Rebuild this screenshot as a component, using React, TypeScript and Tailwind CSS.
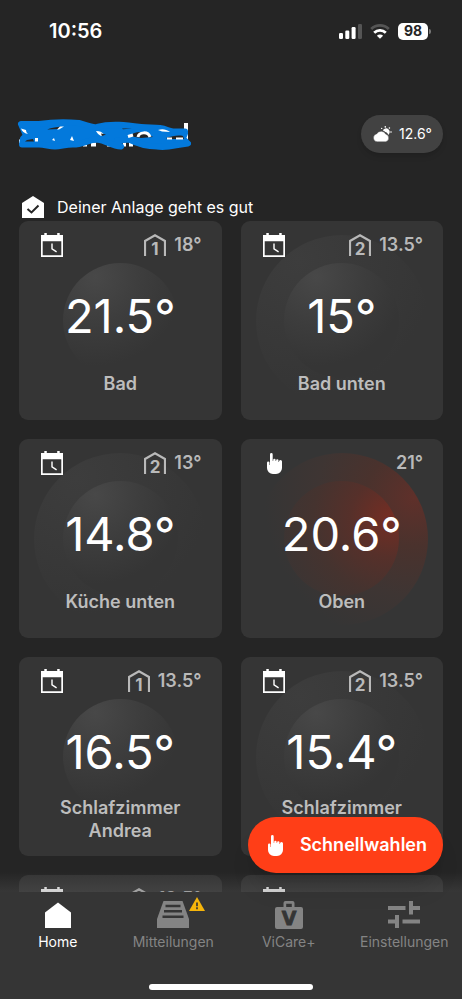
type Room = {
  name: string
  temp: string
  target: string
  program?: "1" | "2"
  manual?: boolean
  raised?: boolean
  rings: "small" | "double" | "heating"
}

const rooms: Room[] = [
  { name: "Bad", temp: "21.5°", target: "18°", program: "1", rings: "small" },
  { name: "Bad unten", temp: "15°", target: "13.5°", program: "2", rings: "double" },
  { name: "Küche unten", temp: "14.8°", target: "13°", program: "2", rings: "double" },
  { name: "Oben", temp: "20.6°", target: "21°", manual: true, rings: "heating" },
  { name: "Schlafzimmer\nAndrea", temp: "16.5°", target: "13.5°", program: "1", rings: "small" },
  { name: "Schlafzimmer", temp: "15.4°", target: "13.5°", program: "2", raised: true, rings: "double" },
  { name: "", temp: "", target: "13.5°", program: "1", rings: "small" },
  { name: "", temp: "", target: "", rings: "small" },
]

function CalendarIcon() {
  return (
    <svg className="w-[22px] h-6" viewBox="0 0 22 24" fill="none">
      <path
        fill="#fff"
        fillRule="evenodd"
        d="M3.3 0h2.5v2h10.4V0h2.5v2H22v22H0V2h3.3zM1.7 8.2v14h18.6v-14z"
      />
      <path d="M11 10.4v5.4l4.6 3" stroke="#fff" strokeWidth="1.4" />
    </svg>
  )
}

function HandIcon() {
  return (
    <svg className="w-[15px] h-[21px]" viewBox="0 0 15 21" fill="#fff">
      <path d="M3 1.4a1.35 1.35 0 0 1 2.7 0V8h.5V7a1.2 1.2 0 0 1 2.4 0v1h.5v-.5a1.2 1.2 0 0 1 2.4 0V9h.5v-.4a1.4 1.4 0 0 1 3 0V15a6 6 0 0 1-6 6H6a6 6 0 0 1-6-6V9.8a1.25 1.25 0 0 1 2.5 0V12H3z" />
    </svg>
  )
}

function ProgramIcon({ n }: { n: string }) {
  return (
    <svg className="w-[22px] h-[30px]" viewBox="0 -4 22 30" fill="none">
      <path d="M1 22V7l10-5.700L21 7v15" stroke="#b9b9b9" strokeWidth="2.200" />
      <text x="11" y="21" textAnchor="middle" fill="#b9b9b9" fontSize="17" fontWeight="700">
        {n}
      </text>
    </svg>
  )
}

function Rings({ kind }: { kind: Room["rings"] }) {
  if (kind === "heating") {
    return (
      <>
        <div className="absolute inset-0 m-auto size-[172px] rounded-full bg-[radial-gradient(circle_at_92%_26%,#5f302a_0%,#4a322d_24%,#3e3533_48%,#353535_74%)]" />
        <div className="absolute inset-0 m-auto size-[115px] rounded-full bg-[radial-gradient(circle_at_92%_32%,#752d23_0%,#56302a_30%,#45332f_58%,#3a3534_90%)]" />
      </>
    )
  }
  return (
    <>
      {kind === "double" && (
        <div className="absolute inset-0 m-auto size-[172px] rounded-full bg-[radial-gradient(circle_at_25%_15%,#3d3d3d_0%,#393939_35%,#353535_70%)]" />
      )}
      <div className="absolute inset-0 m-auto size-[115px] rounded-full bg-[radial-gradient(circle_at_28%_12%,#484848_0%,#3d3d3d_36%,#353535_68%)]" />
    </>
  )
}

function RoomCard({ room }: { room: Room }) {
  return (
    <article className="relative flex flex-col h-[199px] rounded-[9px] bg-[#353535]">
      <Rings kind={room.rings} />
      <div className="relative flex h-12 items-center justify-between pl-[22px] pr-5">
        {room.manual ? (
          <span className="pl-1">
            <HandIcon />
          </span>
        ) : (
          <CalendarIcon />
        )}
        <div className="flex items-center gap-2 text-lg font-semibold text-[#b9b9b9]">
          {room.program && <ProgramIcon n={room.program} />}
          <span>{room.target}</span>
        </div>
      </div>
      <div className="relative flex h-[94px] items-center justify-center text-[47px] text-white">
        {room.temp}
      </div>
      <h2 className="relative flex h-10 flex-col items-center justify-center whitespace-pre-line text-center text-lg leading-[23px] font-semibold text-[#bdbdbd]">
        {room.name}
        {room.raised && <span className="h-[23px] shrink-0" />}
      </h2>
    </article>
  )
}

function StatusBar() {
  return (
    <div className="flex h-[62px] items-center justify-between pl-[49px] pr-[31px] text-white">
      <span className="text-xl font-semibold">10:56</span>
      <div className="flex items-center gap-2">
        <svg className="w-[23px] h-[15px]" viewBox="0 0 23 15" fill="#fff">
          <rect x="0" y="9" width="4" height="6" rx="1.2" />
          <rect x="6.3" y="6.5" width="4" height="8.5" rx="1.2" />
          <rect x="12.6" y="3" width="4" height="12" rx="1.2" />
          <rect x="19" y="0" width="4" height="15" rx="1.2" fill="#555" />
        </svg>
        <svg className="w-5 h-[15px]" viewBox="0 0 20 15" fill="none" strokeWidth="2.8">
          <path d="M1.2 5a12.6 12.6 0 0 1 17.6 0" stroke="#555" />
          <path d="M4.2 8.7a8.3 8.3 0 0 1 11.6 0" stroke="#fff" />
          <path d="M10 14.800 6.900 11.800a4.400 4.400 0 0 1 6.200 0z" fill="#fff" />
        </svg>
        <div className="flex items-center gap-px">
          <span className="flex h-[17px] w-[30px] items-center justify-center rounded-[5px] bg-white text-sm font-bold text-[#252525]">
            98
          </span>
          <span className="h-[5px] w-0.5 rounded-r-full bg-[#777]" />
        </div>
      </div>
    </div>
  )
}

function CoveredName() {
  return (
    <svg className="-ml-0.5 w-[174px] h-8" viewBox="0 0 174 32" fill="none" role="img">
      <path
        d="M2 23.500h5M66 26.500h4M74 26.500h5M90 26.500h4M106 26.500h3M112 26.500h4"
        stroke="#fff"
        strokeWidth="4"
      />
      <path d="M169 5v17" stroke="#fff" strokeWidth="4" />
      <path
        d="M4 6h18c14-2 28-2 40-1 8 2 12 5 18 4 14-4 30-2 44 0 8 1 12 0 19 1s8 3 13 3.500h12v2l-2 5 5 5c-12 1-20 5-31 3-12 0-20-3-28-7l-12 1 4 6c-10 0-14-6-24-7-8 0-14 5-24 5-8 0-12 2-18 2s-10-2-16-2H5l1-6 3-3z"
        fill="#0379dc"
        stroke="#0379dc"
        strokeWidth="6"
        strokeLinejoin="round"
      />
      <path d="M4 10.500c1 3 3 4.500 7 5.500-1-1-2-2-2-4z" fill="#fff" />
      <path d="M8 23.500h9l-1-2.500-6 1zM30 11.500c5-2 10-2.500 14-3l-2 2.500z" fill="#252525" />
      <path d="M43 8.500h4l-5 3h-2z" fill="#fff" />
      <path d="M18 20h3v3.500h-3zM35 22l2-2 1 3zM53 22l2-4 2 5z" fill="#fff" />
      <path d="M79 13c4 0 6 1 8 3.500l-3 1.500c-2-1-4-3-5-5z" fill="#fff" />
      <path d="M84 15.500l5 1-4 1.500zM105 10.500h10l-9 .8z" fill="#252525" />
      <path d="M112 18c5-4 11-5 17-3l7 4-12 1z" fill="#252525" />
      <path d="M121 19c1-5 10-6 12 0M111 18.500l5-1.500" stroke="#fff" strokeWidth="3" />
      <path d="M141 12c4-1.500 8-1 12 2l-8-.5z" fill="#fff" />
      <path d="M149 20c6-2 12-3 17-2l1 3h-16z" fill="#252525" />
      <path d="M150 20.500h5M159 20.500h7" stroke="#fff" strokeWidth="2" />
    </svg>
  )
}

function WeatherButton() {
  return (
    <button
      type="button"
      className="flex h-[38px] items-center gap-[7px] rounded-full bg-[#424242] pl-3 pr-[11px] text-sm text-white shadow-md"
    >
      <svg className="w-[19px] h-4" viewBox="0 0 19 16" fill="#fff">
        <path d="M9.800 4.600a3.600 3.600 0 1 1 5.400 4.300c-.3-1.600-1.500-2.700-3-2.900-.6-.7-1.400-1.200-2.400-1.400z" />
        <circle cx="12.300" cy=".9" r=".8" />
        <circle cx="8.700" cy="2.400" r=".7" />
        <circle cx="16.400" cy="2" r=".8" />
        <circle cx="18" cy="6" r=".8" />
        <path
          d="M4.200 15.800a4 4 0 0 1-.6-7.900A5.200 5.200 0 0 1 12.800 8.200a3.900 3.900 0 0 1-.2 7.600z"
          stroke="#424242"
          strokeWidth=".4"
        />
      </svg>
      12.6°
    </button>
  )
}

function HomeIcon() {
  return (
    <svg className="w-8 h-7" viewBox="0 0 32 28" fill="#fff">
      <path d="M3 11.500 16 1.500l13 10V27H3z" />
    </svg>
  )
}

function InboxIcon() {
  return (
    <svg className="w-8 h-7" viewBox="0 0 32 28">
      <path d="M6.500 0h19L32 18v9H0v-9z" fill="#848484" />
      <path d="M8.500 5h15M7 10.300h18M5.500 15.700h21" stroke="#353535" strokeWidth="2.400" />
    </svg>
  )
}

function BagIcon() {
  return (
    <svg className="w-[30px] h-7" viewBox="0 0 30 28">
      <path
        fill="#848484"
        fillRule="evenodd"
        d="M9.500 6V2a2 2 0 0 1 2-2h7a2 2 0 0 1 2 2v4H27a2 2 0 0 1 2 2v18a2 2 0 0 1-2 2H3a2 2 0 0 1-2-2V8a2 2 0 0 1 2-2zm2.700 0h5.600V2.700h-5.600z"
      />
      <text
        x="15"
        y="24"
        textAnchor="middle"
        fill="#353535"
        stroke="#353535"
        strokeWidth=".8"
        fontFamily="DejaVu Sans, sans-serif"
        fontSize="19"
        fontWeight="700"
      >
        V
      </text>
    </svg>
  )
}

function SlidersIcon() {
  return (
    <svg className="w-8 h-7" viewBox="0 0 32 28" stroke="#848484" strokeWidth="4">
      <path d="M0 7h17.500M23 0v13.500M23 7h9M0 20.500h9M9 14v13M14.500 20.500H32" />
    </svg>
  )
}

const tabs = [
  { label: "Home", icon: <HomeIcon />, active: true },
  { label: "Mitteilungen", icon: <InboxIcon />, alert: true },
  { label: "ViCare+", icon: <BagIcon /> },
  { label: "Einstellungen", icon: <SlidersIcon /> },
]

function TabBar() {
  return (
    <nav className="relative bg-[#353535]">
      <div className="absolute inset-x-0 bottom-full h-5 bg-linear-to-t from-[#606060]/30 to-transparent" />
      <div className="grid grid-cols-4 pt-[9px]">
        {tabs.map((tab) => (
          <a
            key={tab.label}
            href="#"
            className={
              tab.active
                ? "flex flex-col items-center gap-[3px] text-sm text-white"
                : "flex flex-col items-center gap-[3px] text-sm text-[#848484]"
            }
          >
            <span className="relative">
              {tab.icon}
              {tab.alert && (
                <svg className="absolute -top-1 left-8 w-4 h-3.5" viewBox="0 0 16 14">
                  <path d="M8 0l8 14H0z" fill="#f5b50b" />
                  <path d="M8 5.500v3.700M8 10.300v2" stroke="#353535" strokeWidth="1.700" />
                </svg>
              )}
            </span>
            {tab.label}
          </a>
        ))}
      </div>
      <div className="mx-auto mt-8 mb-[9px] h-1.5 w-[164px] rounded-full bg-white" />
    </nav>
  )
}

export default function App() {
  return (
    <div className="flex flex-col h-screen bg-[#252525] font-['Inter',sans-serif]">
      <StatusBar />
      <div className="relative flex min-h-0 flex-1 flex-col">
        <main className="flex-1 overflow-y-auto px-[19px] [scrollbar-width:none]">
          <header className="flex items-center justify-between pt-[53px]">
            <CoveredName />
            <WeatherButton />
          </header>
          <div className="mt-[42px] mb-0.5 flex h-6 items-center gap-[13px] pl-[3px] text-base text-white">
            <svg className="w-[22px] h-[22px]" viewBox="0 0 22 22">
              <path d="M0 7 11 0l11 7v15H0z" fill="#fff" />
              <path d="M5.500 13 9.500 16.500 16.500 9.500" fill="none" stroke="#252525" strokeWidth="2" />
            </svg>
            <p>Deiner Anlage geht es gut</p>
          </div>
          <section className="grid grid-cols-2 gap-[19px]">
            {rooms.map((room, i) => (
              <RoomCard key={i} room={room} />
            ))}
          </section>
        </main>
        <button
          type="button"
          className="absolute right-[19px] bottom-[19px] z-10 flex h-14 items-center gap-[17px] rounded-full bg-[#ff3e17] pl-5 pr-4 text-lg font-semibold text-white shadow-xl"
        >
          <HandIcon />
          Schnellwahlen
        </button>
      </div>
      <TabBar />
    </div>
  )
}
